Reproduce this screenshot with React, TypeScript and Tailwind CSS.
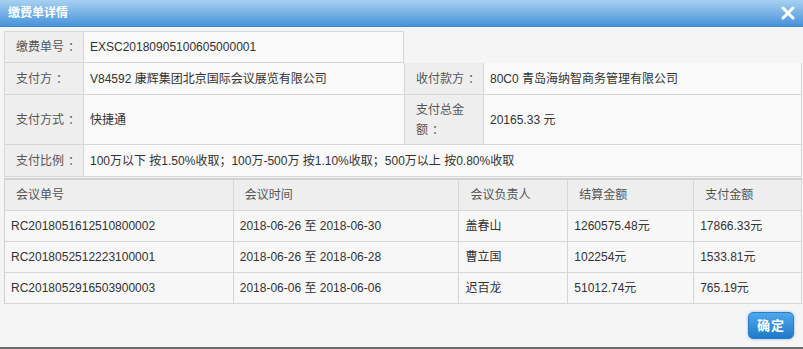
const font = "font-['Liberation_Sans','Noto_Sans_CJK_SC',sans-serif]";

const meetings = [
  { no: "RC2018051612510800002", time: "2018-06-26 至 2018-06-30", owner: "盖春山", settle: "1260575.48元", pay: "17866.33元" },
  { no: "RC2018052512223100001", time: "2018-06-26 至 2018-06-28", owner: "曹立国", settle: "102254元", pay: "1533.81元" },
  { no: "RC2018052916503900003", time: "2018-06-06 至 2018-06-06", owner: "迟百龙", settle: "51012.74元", pay: "765.19元" },
];

const cols = ["w-[229px]", "w-[226px]", "w-[109px]", "w-[126px]", "w-[108px]"];

// 全角冒号在 SC 字体里靠左，补一点间距让它居中
const Colon = () => <span className="pl-[4px]">：</span>;

function Label({ children }: { children: React.ReactNode }) {
  return (
    <div className="w-[79px] shrink-0 flex items-center pl-[11px] bg-[#eeeeee] border-r border-[#d6d6d6] text-[#555] whitespace-nowrap leading-[20px]">
      {children}
    </div>
  );
}

function Value({ children, className = "" }: { children?: React.ReactNode; className?: string }) {
  return (
    <div className={`flex items-center pl-[6px] bg-[#f9f9f9] border-r border-[#d6d6d6] text-[#333] ${className}`}>
      {children}
    </div>
  );
}

export default function App() {
  return (
    <div className={`w-[803px] h-[349px] bg-[#f5f5f5] flex flex-col border-b-2 border-[#6b6b6b] text-[12px] ${font}`}>
      {/* 标题栏 */}
      <div className="h-[27px] shrink-0 flex items-center justify-between pl-[8px] pr-[7px] bg-gradient-to-b from-[#a7d1f1] to-[#4792d9] border-b border-[#3d88d0]">
        <span className="text-white font-bold text-[12px]">缴费单详情</span>
        <svg width="16" height="16" viewBox="0 0 16 16">
          <path d="M3 3 L13 13 M13 3 L3 13" stroke="white" strokeWidth="3" strokeLinecap="round" />
        </svg>
      </div>

      {/* 基本信息 */}
      <div className="ml-[4px] mr-[1px] mt-[4px] flex flex-col">
        <div className="w-[400px] h-[32px] flex border-t border-l border-b border-[#d6d6d6]">
          <Label>缴费单号<Colon /></Label>
          <Value className="flex-1">EXSC20180905100605000001</Value>
        </div>
        <div className="h-[32px] flex border-l border-b border-[#d6d6d6]">
          <Label>支付方<Colon /></Label>
          <Value className="w-[321px]">V84592 康辉集团北京国际会议展览有限公司</Value>
          <Label>收付款方<Colon /></Label>
          <Value className="flex-1">80C0 青岛海纳智商务管理有限公司</Value>
        </div>
        <div className="h-[50px] flex border-l border-b border-[#d6d6d6]">
          <Label>支付方式<Colon /></Label>
          <Value className="w-[321px]">快捷通</Value>
          <Label>
            <span>
              支付总金
              <br />
              额<Colon />
            </span>
          </Label>
          <Value className="flex-1">20165.33 元</Value>
        </div>
        <div className="h-[32px] flex border-l border-b border-[#d6d6d6]">
          <Label>支付比例<Colon /></Label>
          <Value className="flex-1">100万以下 按1.50%收取；100万-500万 按1.10%收取；500万以上 按0.80%收取</Value>
        </div>
      </div>

      {/* 会议列表 */}
      <div className="ml-[4px] mr-[1px] mt-[1px] flex flex-col border-l border-t-2 border-[#d0d0d0]">
        <div className="h-[31px] flex bg-[#eeeeee]">
          {["会议单号", "会议时间", "会议负责人", "结算金额", "支付金额"].map((h, i) => (
            <div key={h} className={`${cols[i]} flex items-center pl-[11px] text-[#555] border-r border-b border-[#d6d6d6]`}>
              {h}
            </div>
          ))}
        </div>
        {meetings.map((m) => (
          <div key={m.no} className="h-[31px] flex bg-[#f7f7f7] text-[#333]">
            {[m.no, m.time, m.owner, m.settle, m.pay].map((v, i) => (
              <div key={i} className={`${cols[i]} flex items-center pl-[6px] border-r border-b border-[#d6d6d6]`}>
                {v}
              </div>
            ))}
          </div>
        ))}
      </div>

      {/* 底部按钮 */}
      <div className="flex justify-end pr-[9px] mt-[8px]">
        <button className="w-[46px] h-[27px] rounded-[5px] bg-gradient-to-b from-[#4fa8ec] to-[#1e7acb] border border-[#2a7fcb] text-white font-bold text-[13px] tracking-[1px] shadow-[0_0_3px_rgba(30,120,200,0.5)]">
          确定
        </button>
      </div>
    </div>
  );
}
